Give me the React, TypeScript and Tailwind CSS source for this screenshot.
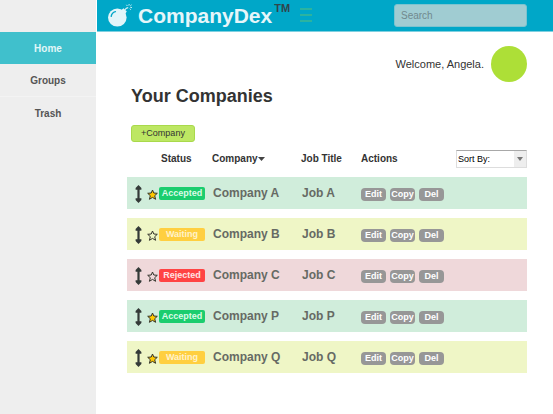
import React from "react";

type Status = "Accepted" | "Waiting" | "Rejected";

interface Entry {
  company: string;
  job: string;
  status: Status;
  starred: boolean;
}

const entries: Entry[] = [
  { company: "Company A", job: "Job A", status: "Accepted", starred: true },
  { company: "Company B", job: "Job B", status: "Waiting", starred: false },
  { company: "Company C", job: "Job C", status: "Rejected", starred: false },
  { company: "Company P", job: "Job P", status: "Accepted", starred: true },
  { company: "Company Q", job: "Job Q", status: "Waiting", starred: true },
];

const rowColor: Record<Status, string> = {
  Accepted: "bg-[#d0eddb]",
  Waiting: "bg-[#eff6c6]",
  Rejected: "bg-[#efd8da]",
};

const badgeColor: Record<Status, string> = {
  Accepted: "bg-[#1bcd6e] text-[#dcfbe8]",
  Waiting: "bg-[#ffcf40] text-[#fff3cb]",
  Rejected: "bg-[#ff4343] text-[#ffe3e3]",
};

function BombIcon() {
  return (
    <svg width="24" height="24" viewBox="0 0 24 24" aria-hidden="true">
      <ellipse cx="9.3" cy="13.6" rx="9.3" ry="9" fill="#e2f5f9" />
      <path d="M13 6.2l2.6-2 3.2 3.4-2 2.8z" fill="#e2f5f9" />
      <path d="M3.2 12.4c.3-2.4 1.8-4.1 4.2-4.8" fill="none" stroke="#00a7c8" strokeWidth="1.4" strokeLinecap="round" />
      <path d="M17 5.8c.8-1.4 1.8-2 3.2-2.2" fill="none" stroke="#e2f5f9" strokeWidth="1.2" />
      <path d="M18.4.8l1 1.2M21.2 0l-.3 1.6M23.6.8l-1.4 1.2M24 3.6l-1.7-.2M22.8 5.8l-1-1.2" fill="none" stroke="#c5ebf2" strokeWidth="1" />
    </svg>
  );
}

function MoveIcon() {
  return (
    <svg width="7" height="18" viewBox="0 0 7 18" aria-hidden="true">
      <path
        d="M3.5 0L6.4 3v1.8H4.6v8.4h1.8V15L3.5 18 .6 15v-1.8h1.8V4.8H.6V3z"
        fill="#343a38"
      />
    </svg>
  );
}

function StarIcon({ filled }: { filled: boolean }) {
  return (
    <svg width="11" height="11" viewBox="0 0 11 11" aria-hidden="true">
      <path
        d="M5.5 1l1.3 3 3.5.3-2.6 2.4.9 3.6-3.1-1.9-3.1 1.9.9-3.6L.7 4.3 4.2 4z"
        fill={filled ? "#ffc800" : "none"}
        stroke="#33332b"
        strokeWidth="1"
      />
    </svg>
  );
}

function NavLink({ label, active = false }: { label: string; active?: boolean }) {
  return (
    <a
      href="#"
      aria-current={active ? "page" : undefined}
      className={`flex items-center justify-center text-[10px] font-bold ${
        active ? "h-8 bg-[#40c0cc] text-[#e2f7f8]" : "h-[33px] border-b border-[#f3f3f3] text-[#555555] last:border-b-0"
      }`}
    >
      {label}
    </a>
  );
}

function CompanyRow({ entry }: { entry: Entry }) {
  const cell = `h-[41px] border-t-[9px] border-white bg-clip-padding p-0 text-left ${rowColor[entry.status]}`;
  return (
    <tr>
      <td className={cell}>
        <div className="flex items-center gap-[5px] pt-0.5 pl-2">
          <button type="button" aria-label={`Move ${entry.company}`}>
            <MoveIcon />
          </button>
          <button type="button" aria-label={`Star ${entry.company}`} aria-pressed={entry.starred}>
            <StarIcon filled={entry.starred} />
          </button>
        </div>
      </td>
      <td className={cell}>
        <span
          className={`flex h-[13px] w-[46px] items-center justify-center rounded-xs text-[9px] leading-3 font-bold ${badgeColor[entry.status]}`}
        >
          {entry.status}
        </span>
      </td>
      <td className={`${cell} pl-px text-[12px] font-bold text-[#666a64]`}>{entry.company}</td>
      <td className={`${cell} pl-px text-[12px] font-bold text-[#666a64]`}>{entry.job}</td>
      <td className={cell} colSpan={2}>
        <div className="flex gap-1 pt-0.5">
          {["Edit", "Copy", "Del"].map((action) => (
            <button
              key={action}
              type="button"
              className="flex h-[13px] w-[25px] items-center justify-center rounded-sm bg-[#979797] text-[9px] leading-3 font-bold text-white"
            >
              {action}
            </button>
          ))}
        </div>
      </td>
    </tr>
  );
}

export default function App() {
  return (
    <div className="flex min-h-screen bg-white font-['Liberation_Sans',Arial,sans-serif]">
      <nav aria-label="Main" className="w-24 shrink-0 bg-[#eeeeee] pt-8">
        <NavLink label="Home" active />
        <NavLink label="Groups" />
        <NavLink label="Trash" />
      </nav>

      <div className="ml-px min-w-0 flex-1">
        <header className="flex h-8 items-center border-b border-[#7fd0e0] bg-[#00a7c8] pr-[26px] pl-[11px]">
          <BombIcon />
          <div className="ml-1.5 flex text-[21px] leading-8 font-bold text-[#e6f6fa]">
            CompanyDex
            <sup className="top-0 ml-0.5 pt-0.5 text-[11px] leading-3 text-[#30454c]">TM</sup>
          </div>
          <button type="button" aria-label="Menu" className="ml-2.5 flex w-3 flex-col gap-1 pb-px">
            <span className="h-0.5 bg-[#2bb3a0]" />
            <span className="h-0.5 bg-[#2bb3a0]" />
            <span className="h-0.5 bg-[#2bb3a0]" />
          </button>
          <input
            type="search"
            aria-label="Search"
            placeholder="Search"
            className="ml-auto h-[23px] w-[133px] rounded-[3px] border border-[#7cc3cf] bg-[#a0ccd2] px-1.5 text-[10px] text-[#4f6f75] placeholder:text-[#71898e]"
          />
        </header>

        <main className="pr-[26px] pl-[30px]">
          <div className="mt-3.5 flex items-center justify-end gap-[7px]">
            <span className="text-[11px] text-[#333333]">Welcome, Angela.</span>
            <span className="size-9 rounded-full bg-[#addf37]" />
          </div>

          <h1 className="mt-0.5 ml-1 text-[18px] leading-6 font-bold text-[#333333]">Your Companies</h1>

          <button
            type="button"
            className="mt-[17px] ml-1 flex h-[17px] w-16 items-center justify-center rounded-[3px] border border-[#a9d94b] bg-[#bde763] text-[9px] text-[#333333]"
          >
            +Company
          </button>

          <table className="mt-2 w-full table-fixed border-separate border-spacing-0">
            <colgroup>
              <col className="w-8" />
              <col className="w-[53px]" />
              <col className="w-[89px]" />
              <col className="w-[60px]" />
              <col />
              <col className="w-[71px]" />
            </colgroup>
            <thead>
              <tr className="h-[18px] text-left text-[10px] leading-[18px] text-[#333333]">
                <td className="p-0" />
                <th scope="col" className="p-0 pl-0.5">Status</th>
                <th scope="col" className="p-0" aria-sort="descending">
                  <button type="button" className="flex items-center font-bold">
                    Company
                    <svg width="7" height="4" viewBox="0 0 7 4" aria-hidden="true">
                      <path d="M0 0h7L3.5 4z" fill="#444444" />
                    </svg>
                  </button>
                </th>
                <th scope="col" className="p-0">Job Title</th>
                <th scope="col" className="p-0">Actions</th>
                <td className="p-0">
                  <div className="grid grid-cols-[1fr_12px] border border-[#dddddd] border-t-[#a8a8a8]">
                    <select
                      aria-label="Sort by"
                      className="col-span-2 col-start-1 row-start-1 h-4 appearance-none bg-transparent px-px text-[9px] leading-4 text-black"
                    >
                      <option>Sort By:</option>
                      <option>Status</option>
                      <option>Company</option>
                      <option>Job Title</option>
                    </select>
                    <span className="pointer-events-none col-start-2 row-start-1 flex items-center justify-center bg-[#eeeeee]">
                      <svg width="6" height="4" viewBox="0 0 6 4" aria-hidden="true">
                        <path d="M0 0h6L3 4z" fill="#777777" />
                      </svg>
                    </span>
                  </div>
                </td>
              </tr>
            </thead>
            <tbody>
              {entries.map((entry) => (
                <CompanyRow key={entry.company} entry={entry} />
              ))}
            </tbody>
          </table>
        </main>
      </div>
    </div>
  );
}
